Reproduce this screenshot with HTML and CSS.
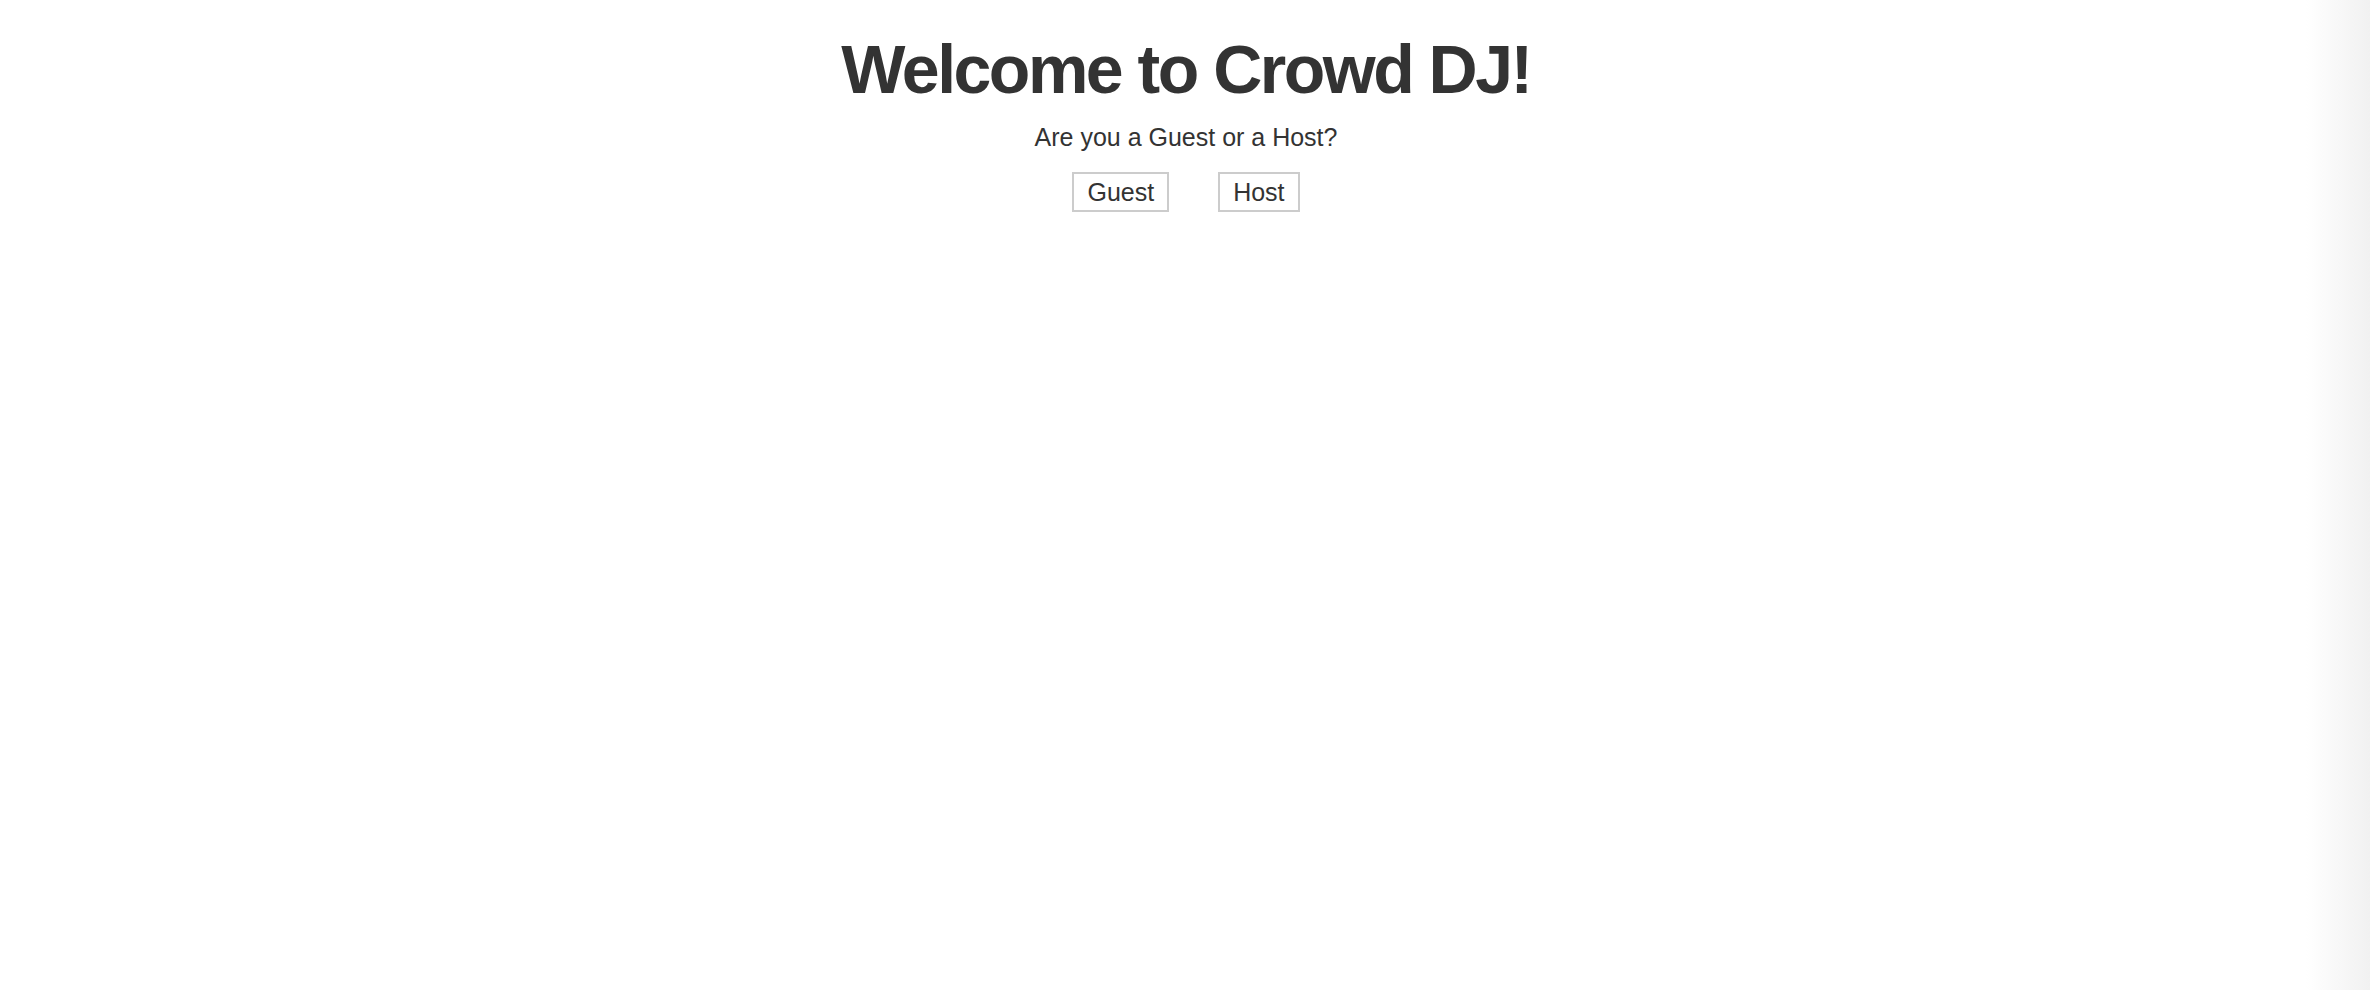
FILE: index.html
```html
<!DOCTYPE html>
<html lang="en">
<head>
<meta charset="utf-8">
<title>Crowd DJ</title>
<link rel="stylesheet" href="styles.css">
</head>
<body>
<main class="welcome">
  <h1 class="welcome-title">Welcome to Crowd DJ!</h1>
  <p class="welcome-question">Are you a Guest or a Host?</p>
  <div class="role-buttons">
    <button class="role-btn" type="button">Guest</button>
    <button class="role-btn" type="button">Host</button>
  </div>
</main>
</body>
</html>
```

FILE: styles.css
```css
html, body {
  margin: 0;
  padding: 0;
  height: 100%;
}
body {
  font-family: "Liberation Sans", Arial, Helvetica, sans-serif;
  color: #333;
  background: linear-gradient(to right, #ffffff calc(100% - 64px), #f1f1f1 100%);
}
.welcome {
  display: flex;
  flex-direction: column;
  align-items: center;
  padding-top: 32px;
  padding-left: 2px;
}
.welcome-title {
  margin: 0;
  font-size: 68px;
  line-height: 75px;
  font-weight: bold;
  letter-spacing: -2.5px;
  color: #333;
}
.welcome-question {
  margin: 12px 0 0;
  font-size: 25px;
  line-height: 36px;
  color: #333;
}
.role-buttons {
  display: flex;
  gap: 49px;
  margin-top: 17px;
}
.role-btn {
  font-family: "Liberation Sans", Arial, Helvetica, sans-serif;
  font-size: 25px;
  line-height: 36px;
  height: 40px;
  padding: 0 13px;
  border: 2px solid #cccccc;
  background: #ffffff;
  color: #333;
  border-radius: 0;
}
```
